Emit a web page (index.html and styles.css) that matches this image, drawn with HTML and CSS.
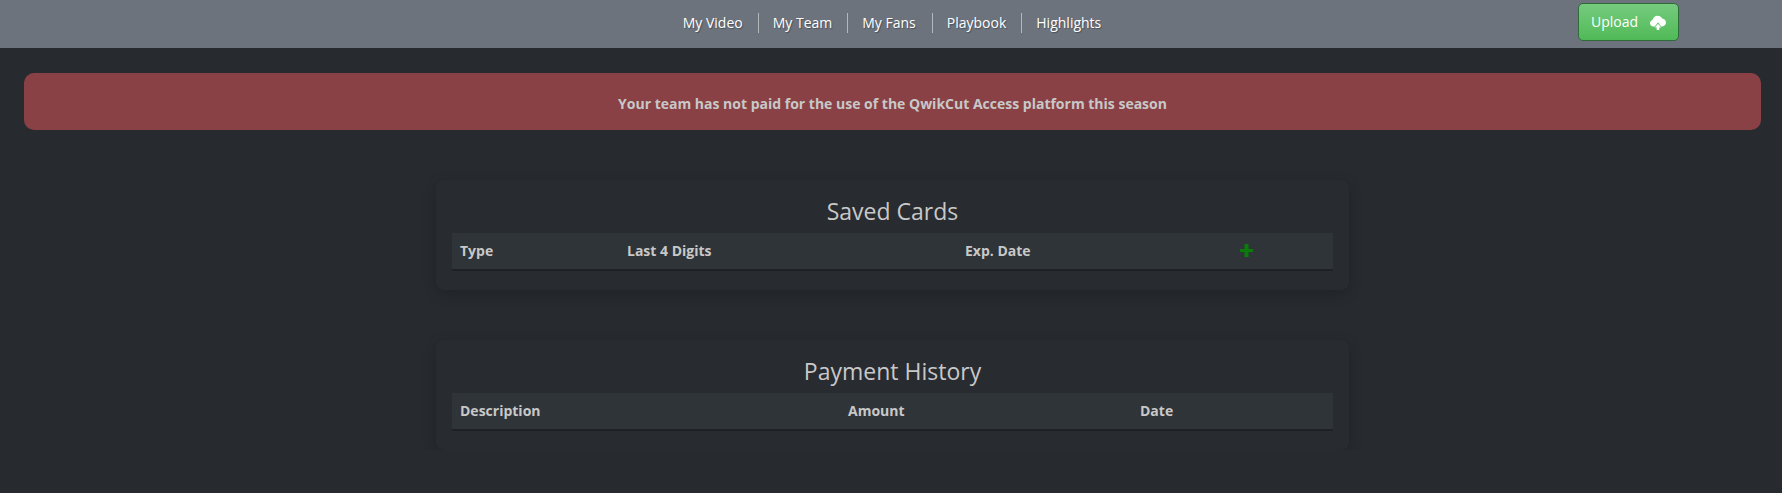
FILE: index.html
```html
<!DOCTYPE html>
<html lang="en">
<head>
  <meta charset="UTF-8">
  <title>Billing - QwikCut Access</title>
  <link rel="stylesheet" href="styles.css">
</head>
<body>

  <header class="topbar">
    <nav class="topnav">
      <a href="#">My Video</a>
      <a href="#">My Team</a>
      <a class="nav-fans" href="#">My Fans</a>
      <a href="#">Playbook</a>
      <a href="#">Highlights</a>
    </nav>
    <button class="upload-btn" type="button">
      Upload
      <svg class="upload-icon" viewBox="0 0 16 15" width="16" height="15" aria-hidden="true">
        <path fill="#fff" d="M3.4 11.4C1.5 11.4 0 10 0 8.2c0-1.5 1-2.8 2.5-3.2C3 2.6 5 .8 7.6.8c2 0 3.700 1 4.500 2.700C14.300 3.700 16 5.400 16 7.600c0 2.100-1.700 3.800-3.800 3.800h-1L8 7.300 4.800 11.400z"/>
        <path fill="#fff" d="M8 8.800l3.200 3.800H9.300V15H6.700v-2.400H4.800z"/>
      </svg>
    </button>
  </header>

  <main>
    <div class="alert">Your team has not paid for the use of the QwikCut Access platform this season</div>

    <section class="panel">
      <h2>Saved Cards</h2>
      <table class="cards-table">
        <thead>
          <tr>
            <th>Type</th>
            <th>Last 4 Digits</th>
            <th>Exp. Date</th>
            <th>
              <svg class="add-card" viewBox="0 0 13 13" width="13" height="13" aria-hidden="true">
                <path fill="#0a7a0a" d="M4.500 0h4v5h4.500v3H8.500v5h-4V8H0V5h4.500z"/>
              </svg>
            </th>
          </tr>
        </thead>
      </table>
    </section>

    <section class="panel">
      <h2>Payment History</h2>
      <table class="history-table">
        <thead>
          <tr>
            <th>Description</th>
            <th>Amount</th>
            <th>Date</th>
          </tr>
        </thead>
      </table>
    </section>
  </main>

</body>
</html>
```

FILE: styles.css
```css
/* Basic Styles */
body {
  font-family: "Open Sans", Arial, sans-serif;
  background-color: #272b30;
  color: #c8c8c8;
  margin: 0;
  padding: 0;
}

.topbar {
  display: flex;
  justify-content: center;
  align-items: center;
  height: 48px;
  background-color: #6c737d;
  position: relative;
}

.topnav {
  display: flex;
  align-items: center;
  margin-top: -2px;
  margin-left: 3px;
}

.topnav a {
  color: #fff;
  font-size: 14px;
  line-height: 20px;
  padding: 0 15px 0 14px;
  text-decoration: none;
  text-shadow: 1px 1px 1px rgba(0, 0, 0, 0.3);
  border-left: 1px solid #b4b8bd;
}

.topnav a:first-child {
  border-left: none;
}

.topnav .nav-fans {
  padding-right: 16px;
}

.upload-btn {
  position: absolute;
  top: 3px;
  left: 1578px;
  display: flex;
  align-items: center;
  justify-content: space-between;
  box-sizing: border-box;
  width: 101px;
  height: 38px;
  padding: 0 12px 2px 12px;
  font-family: inherit;
  font-size: 14px;
  color: #fff;
  background: linear-gradient(#76cb7e, #50ba57);
  border: 1px solid #2f6b3a;
  border-radius: 5px;
}

.upload-icon {
  margin-top: 2px;
}

/* Alert */
main {
  padding: 25px 21px 0 24px;
}

.alert {
  height: 57px;
  line-height: 61px;
  text-align: center;
  font-size: 14px;
  font-weight: 700;
  color: #c8c8c8;
  background-color: #8a4145;
  border-radius: 10px;
}

/* Cards */
.panel {
  box-sizing: border-box;
  width: 913px;
  height: 110px;
  margin: 50px auto 0 auto;
  padding: 16px;
  border-radius: 8px;
  background-color: #282b30;
  box-shadow: 0 4px 14px rgba(0, 0, 0, 0.2);
}

.panel h2 {
  margin: 0;
  height: 37px;
  font-size: 23px;
  font-weight: 400;
  line-height: 30px;
  text-align: center;
  color: #c8c8c8;
}

table {
  width: 100%;
  border-spacing: 0;
  table-layout: fixed;
  background-color: #2f3438;
}

th {
  height: 38px;
  padding: 0 8px 1px 8px;
  box-sizing: border-box;
  border-bottom: 2px solid #1f2125;
  font-size: 14px;
  font-weight: 700;
  text-align: left;
  color: #c8c8c8;
}

.cards-table th:nth-child(1) { width: 167px; }
.cards-table th:nth-child(2) { width: 338px; }
.cards-table th:nth-child(3) { width: 275px; }

.history-table th:nth-child(1) { width: 388px; }
.history-table th:nth-child(2) { width: 292px; }

.add-card {
  display: block;
}
```
